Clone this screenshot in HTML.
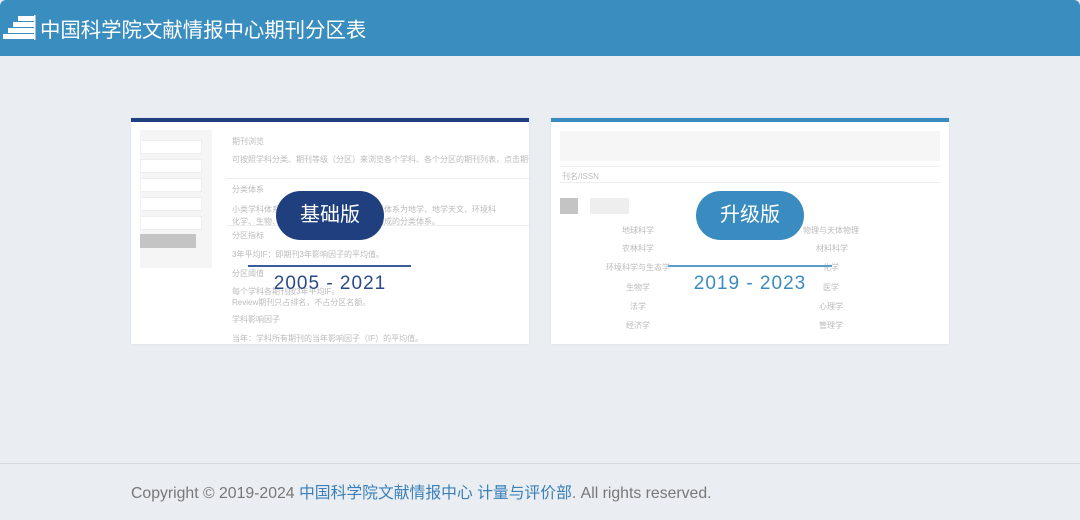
<!DOCTYPE html>
<html><head><meta charset="utf-8"><style>
*{margin:0;padding:0;box-sizing:border-box}
body{width:1080px;height:520px;background:#eaeef3;font-family:"Liberation Sans","Noto Sans CJK SC",sans-serif;position:relative;overflow:hidden}
.hdr{position:absolute;left:0;top:0;width:1080px;height:56px;background:#3a8dbf;border-radius:6px 6px 0 0}
.hdr .t{position:absolute;left:40px;top:13px;color:#fff;font-size:20.4px;letter-spacing:0}
.card{position:absolute;top:118px;width:398px;height:226px;background:#fff;border-top:4px solid;box-shadow:0 0 2px #d6dbe2;overflow:hidden}
.ab{position:absolute;color:#bbb;font-size:8px;white-space:nowrap}
.pill{position:absolute;width:108px;height:49px;border-radius:25px;color:#fff;font-size:20px;text-align:center;line-height:49px}
.line{position:absolute;height:2px}
.yr{position:absolute;font-size:19px;letter-spacing:1px;text-align:center;width:200px}
.hr{position:absolute;height:1px;background:#eee}
.ft{position:absolute;left:0;top:463px;width:1080px;height:57px;border-top:1px solid #d5dbe2}
.ft p{position:absolute;left:131px;top:16px;font-size:15.8px;color:#777}
.ft a{color:#3a7fb8;text-decoration:none}
</style></head><body>
<div class="hdr">
<svg style="position:absolute;left:3px;top:14px" width="34" height="26" viewBox="0 0 34 26"><g fill="#fff"><rect x="0" y="20" width="31" height="5"/><rect x="5" y="14" width="26" height="5"/><rect x="10" y="8" width="21" height="5"/><rect x="15" y="2" width="16" height="5"/><rect x="31" y="1" width="1.5" height="25"/></g></svg>
<div class="t">中国科学院文献情报中心期刊分区表</div></div>

<div class="card" style="left:131px;border-color:#1f3f7f">
<div style="position:absolute;left:9px;top:8px;width:72px;height:138px;background:#f5f5f5"></div>
<div style="position:absolute;left:9px;top:18px;width:62px;height:14px;background:#fff;border:1px solid #eee"></div>
<div style="position:absolute;left:9px;top:37px;width:62px;height:14px;background:#fff;border:1px solid #eee"></div>
<div style="position:absolute;left:9px;top:56px;width:62px;height:14px;background:#fff;border:1px solid #eee"></div>
<div style="position:absolute;left:9px;top:75px;width:62px;height:14px;background:#fff;border:1px solid #eee"></div>
<div style="position:absolute;left:9px;top:94px;width:62px;height:14px;background:#fff;border:1px solid #eee"></div>
<div style="position:absolute;left:9px;top:112px;width:56px;height:14px;background:#c4c4c4"></div>
<div class="ab" style="left:101px;top:14px">期刊浏览</div>
<div class="ab" style="left:101px;top:32px">可按照学科分类、期刊等级（分区）来浏览各个学科、各个分区的期刊列表，点击期刊列表任意一本</div>
<div class="hr" style="left:95px;top:56px;width:303px"></div>
<div class="ab" style="left:101px;top:62px">分类体系</div>
<div class="ab" style="left:101px;top:82px">小类学科体系是期刊所属的学科；大类学科体系为地学、地学天文、环境科</div>
<div class="ab" style="left:101px;top:94px">化学、生物、医学、综合性期刊等学科所构成的分类体系。</div>
<div class="hr" style="left:95px;top:103px;width:303px"></div>
<div class="ab" style="left:101px;top:108px">分区指标</div>
<div class="ab" style="left:101px;top:127px">3年平均IF：即期刊3年影响因子的平均值。</div>
<div class="ab" style="left:101px;top:146px">分区阈值</div>
<div class="ab" style="left:101px;top:164px">每个学科各期刊按3年平均IF。</div>
<div class="ab" style="left:101px;top:175px">Review期刊只占排名，不占分区名额。</div>
<div class="ab" style="left:101px;top:192px">学科影响因子</div>
<div class="ab" style="left:101px;top:211px">当年：学科所有期刊的当年影响因子（IF）的平均值。</div>
</div>
<div class="pill" style="left:276px;top:191px;background:#1f3f7f">基础版</div>
<div class="line" style="left:248px;top:265px;width:163px;background:#3b5b99"></div>
<div class="yr" style="left:230px;top:273px;color:#2b4a8c">2005 - 2021</div>

<div class="card" style="left:551px;border-color:#3a8cc0">
<div style="position:absolute;left:9px;top:9px;width:380px;height:30px;background:#f6f6f6"></div>
<div class="hr" style="left:9px;top:44px;width:380px"></div>
<div class="ab" style="left:11px;top:49px">刊名/ISSN</div>
<div class="hr" style="left:9px;top:60px;width:380px"></div>
<div style="position:absolute;left:9px;top:76px;width:18px;height:16px;background:#c4c4c4"></div>
<div style="position:absolute;left:39px;top:76px;width:39px;height:16px;background:#eee"></div>
<div class="ab" style="left:71px;top:103px">地球科学</div><div class="ab" style="left:252px;top:103px">物理与天体物理</div>
<div class="ab" style="left:71px;top:121px">农林科学</div><div class="ab" style="left:265px;top:121px">材料科学</div>
<div class="ab" style="left:55px;top:140px">环境科学与生态学</div><div class="ab" style="left:272px;top:140px">化学</div>
<div class="ab" style="left:75px;top:160px">生物学</div><div class="ab" style="left:272px;top:160px">医学</div>
<div class="ab" style="left:79px;top:179px">法学</div><div class="ab" style="left:268px;top:179px">心理学</div>
<div class="ab" style="left:75px;top:198px">经济学</div><div class="ab" style="left:268px;top:198px">管理学</div>
</div>
<div class="pill" style="left:696px;top:191px;background:#3a8cc0">升级版</div>
<div class="line" style="left:668px;top:265px;width:164px;background:#5a9dc8"></div>
<div class="yr" style="left:650px;top:273px;color:#3a8cc0">2019 - 2023</div>

<div class="ft"><p>Copyright © 2019-2024 <a>中国科学院文献情报中心 计量与评价部</a>. All rights reserved.</p></div>
</body></html>
